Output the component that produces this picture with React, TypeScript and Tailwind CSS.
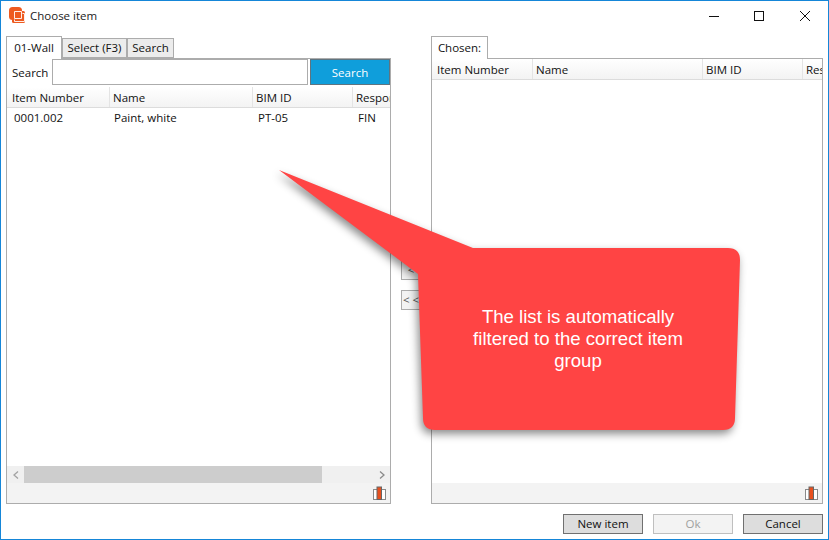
import React from 'react';

type Col = { label: string; width: string };

const rightColumns: Col[] = [
  { label: 'Item Number', width: 'w-[101px]' },
  { label: 'Name', width: 'w-[170px]' },
  { label: 'BIM ID', width: 'w-[100px]' },
  { label: 'Responsible', width: 'w-[100px]' },
];

const leftColumns: Col[] = [
  { label: 'Item Number', width: 'w-[103px]' },
  { label: 'Name', width: 'w-[143px]' },
  { label: 'BIM ID', width: 'w-[100px]' },
  { label: 'Responsible', width: 'w-[100px]' },
];

const GridHeader = ({ cols, cellPad }: { cols: Col[]; cellPad: string }) => (
  <div className="flex h-[21px] shrink-0 overflow-hidden border-b border-[#dcdcdc] bg-gradient-to-b from-white to-[#f3f3f3]">
    {cols.map((col, i) => (
      <div
        key={col.label}
        className={`${col.width} ${i === 0 ? 'pl-[5px]' : cellPad} shrink-0 whitespace-nowrap border-r border-[#e4e4e4] leading-[22px]`}
      >
        {col.label}
      </div>
    ))}
  </div>
);

const ColumnChooserIcon = () => (
  <svg width="15" height="15" viewBox="0 0 15 15">
    <rect x="1.5" y="3.5" width="4" height="10" fill="#fff" stroke="#8a8a8a" />
    <rect x="9.5" y="3.5" width="4" height="10" fill="#fff" stroke="#8a8a8a" />
    <rect x="5" y="1" width="4.5" height="12.5" fill="#e8501f" stroke="#666" />
  </svg>
);

const GridFooter = () => (
  <div className="flex h-[20px] shrink-0 items-center justify-end bg-[#f3f3f3] pr-[3px]">
    <ColumnChooserIcon />
  </div>
);

const Tab = ({ label, active, width }: { label: string; active?: boolean; width: string }) =>
  active ? (
    <div className={`${width} relative z-10 -mb-px flex h-[23px] items-center justify-center border border-b-0 border-[#acacac] bg-white`}>
      {label}
    </div>
  ) : (
    <div className={`${width} flex h-[20px] items-center justify-center border border-[#acacac] bg-[#ececec]`}>
      {label}
    </div>
  );

const DialogButton = ({ label, disabled }: { label: string; disabled?: boolean }) => (
  <div
    className={
      disabled
        ? 'flex h-[20px] w-[80px] items-center justify-center border border-[#bfbfbf] bg-[#f3f3f3] text-[#a0a0a0]'
        : 'flex h-[20px] w-[80px] items-center justify-center border border-[#707070] bg-[#dddddd]'
    }
  >
    {label}
  </div>
);

const MoveButton = ({ label }: { label: string }) => (
  <div className="flex h-[20px] w-[20px] items-center justify-center whitespace-nowrap border border-[#acacac] bg-[#f3f3f3] text-[#555]">
    {label}
  </div>
);

export default function App() {
  return (
    <div
      className="relative flex h-[540px] w-[829px] flex-col overflow-hidden border border-[#1586d8] bg-white text-[#111]"
      style={{ fontFamily: '"Open Sans", "Liberation Sans", sans-serif', fontSize: 11.5 }}
    >
      {/* Title bar */}
      <div className="flex h-[35px] shrink-0 items-center pb-[6px] pl-[8px]">
        <svg width="17" height="17" viewBox="0 0 17 17">
          <rect x="0" y="0" width="13" height="13" rx="3.5" fill="#ee5a1f" />
          <rect x="3" y="4" width="13" height="12" rx="1.5" fill="#ee5a1f" />
          <path d="M5.5 4.5H12.5V11.5H5.5Z" fill="none" stroke="#fff" strokeWidth="0.9" />
          <path d="M13.5 6.5H15.5V14.5H5.5V12.5" fill="none" stroke="#fff" strokeWidth="0.9" />
        </svg>
        <span className="ml-[4px] text-[#222]">Choose item</span>
        <div className="ml-auto flex items-center">
          <svg width="10" height="10" viewBox="0 0 10 10" className="mr-[35px]">
            <path d="M0 5.5H10" stroke="#111" fill="none" />
          </svg>
          <svg width="10" height="10" viewBox="0 0 10 10" className="mr-[36px]">
            <rect x="0.5" y="0.5" width="9" height="9" stroke="#111" fill="none" />
          </svg>
          <svg width="10" height="10" viewBox="0 0 10 10" className="mr-[18px]">
            <path d="M0 0L10 10M10 0L0 10" stroke="#111" fill="none" />
          </svg>
        </div>
      </div>

      {/* Main area */}
      <div className="flex h-[468px] shrink-0 pl-[5px]">
        {/* Left panel */}
        <div className="flex w-[385px] shrink-0 flex-col">
          <div className="flex h-[22px] shrink-0 items-end">
            <Tab label="01-Wall" active width="w-[56px]" />
            <Tab label="Select (F3)" width="w-[65px]" />
            <Tab label="Search" width="w-[47px]" />
          </div>
          <div className="flex min-h-0 flex-1 flex-col border border-[#acacac]">
            <div className="flex h-[26px] shrink-0 items-stretch">
              <span className="w-[45px] shrink-0 pl-[5px] leading-[27px]">Search</span>
              <div className="w-[256px] shrink-0 border border-[#acacac] bg-white" />
              <div className="ml-[2px] flex flex-1 items-center justify-center border border-[#5f7480] bg-[#0f9edb] pt-[1px] text-white">
                Search
              </div>
            </div>
            <div className="h-[2px] shrink-0" />
            <GridHeader cols={leftColumns} cellPad="pl-[3px]" />
            <div className="flex h-[19px] shrink-0 items-center overflow-hidden whitespace-nowrap">
              <span className="w-[107px] shrink-0 pl-[7px]">0001.002</span>
              <span className="w-[144px] shrink-0">Paint, white</span>
              <span className="w-[100px] shrink-0">PT-05</span>
              <span>FIN</span>
            </div>
            <div className="min-h-0 flex-1" />
            {/* Horizontal scrollbar */}
            <div className="flex h-[17px] shrink-0 items-stretch bg-[#f0f0f0]">
              <div className="flex w-[17px] shrink-0 items-center justify-center">
                <svg width="6" height="8" viewBox="0 0 6 8">
                  <path d="M5 0.5L1 4L5 7.5" stroke="#a3a3a3" strokeWidth="1.3" fill="none" />
                </svg>
              </div>
              <div className="w-[298px] shrink-0 bg-[#cdcdcd]" />
              <div className="flex-1" />
              <div className="flex w-[17px] shrink-0 items-center justify-center">
                <svg width="6" height="8" viewBox="0 0 6 8">
                  <path d="M1 0.5L5 4L1 7.5" stroke="#8a8a8a" strokeWidth="1.3" fill="none" />
                </svg>
              </div>
            </div>
            <GridFooter />
          </div>
        </div>

        {/* Move buttons */}
        <div className="flex w-[40px] shrink-0 flex-col gap-[10px] pl-[10px] pt-[224px]">
          <MoveButton label="<" />
          <MoveButton label="< <" />
        </div>

        {/* Right panel */}
        <div className="flex w-[392px] shrink-0 flex-col">
          <div className="flex h-[22px] shrink-0 items-end">
            <Tab label="Chosen:" active width="w-[57px]" />
          </div>
          <div className="flex min-h-0 flex-1 flex-col overflow-hidden border border-[#acacac]">
            <GridHeader cols={rightColumns} cellPad="pl-[3px]" />
            <div className="min-h-0 flex-1" />
            <GridFooter />
          </div>
        </div>
      </div>

      {/* Dialog buttons */}
      <div className="flex flex-1 items-start justify-end gap-[10px] pr-[5px] pt-[10px]">
        <DialogButton label="New item" />
        <DialogButton label="Ok" disabled />
        <DialogButton label="Cancel" />
      </div>

      {/* Callout annotation */}
      <svg
        width="829"
        height="540"
        viewBox="0 0 829 540"
        className="absolute left-[-1px] top-[-1px] drop-shadow-[-2px_4px_4px_rgba(0,0,0,0.45)]"
      >
        <path
          d="M279 170L473 248H728Q740 248 740 260L735 418Q735 430 723 430H435Q423 430 423 418L418 274Z"
          fill="#ff4444"
        />
      </svg>
      <div
        className="absolute left-[471px] top-[305px] w-[212px] text-center text-[18.6px] leading-[22px] text-white"
        style={{ fontFamily: '"Liberation Sans", Arial, sans-serif' }}
      >
        The list is automatically filtered to the correct item group
      </div>
    </div>
  );
}
